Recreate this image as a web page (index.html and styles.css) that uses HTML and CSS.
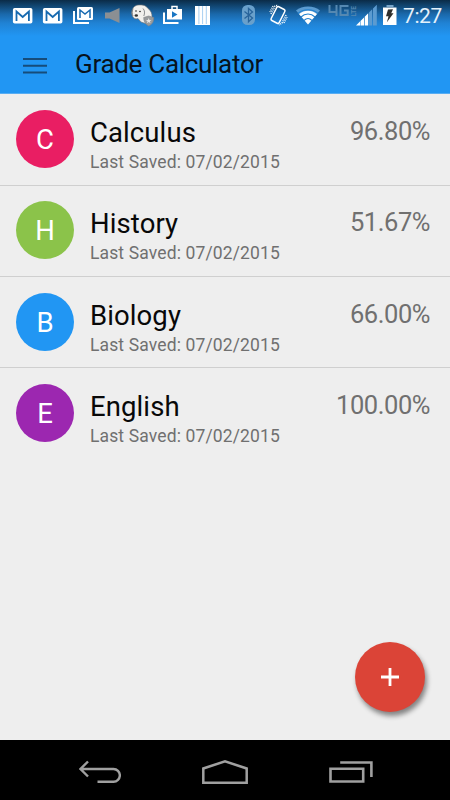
FILE: index.html
```html
<!DOCTYPE html>
<html lang="en">
<head>
<meta charset="utf-8">
<title>Grade Calculator</title>
<link rel="stylesheet" href="styles.css">
</head>
<body>
<div class="screen">
  <header class="top">
    <div class="status">
      <svg class="notifications" width="220" height="32" viewBox="0 0 220 32">
        <defs>
          <g id="mail">
            <rect width="19.5" height="15.5" rx="1.8" fill="#fff"/>
            <path d="M3.6 13V3.6L9.8 9l6.2-5.4V13" fill="none" stroke="#176ab0" stroke-width="1.8"/>
          </g>
        </defs>
        <use href="#mail" x="12.9" y="8"/>
        <use href="#mail" x="42.9" y="8"/>
        <path d="M74 11v12h15" fill="none" stroke="#fff" stroke-width="2"/>
        <rect x="77" y="7" width="16" height="13" rx="1.5" fill="#fff"/>
        <path d="M80 18v-8l5 4 5-4v8" fill="none" stroke="#176ab0" stroke-width="1.5"/>
        <path d="M105 12.5h4.500L119.500 8v15l-10-4.500H105z" fill="#8b8f93"/>
        <path d="M132.500 10c.5-3.500 3.500-5 6.500-5 4-.5 7 .5 9 3.500 3 2 4 5 4 8 0 4-2 7.500-5 7.500l-6-2-3-3.500c-2 .8-4 .3-5-1.500-1.500-2-1.500-5-.5-7z" fill="#f1f0ed" stroke="#6b6f72" stroke-width=".6"/>
        <path d="M143 8.500c2 2 1.800 5 .8 7.500" fill="none" stroke="#8b8e90" stroke-width="1"/>
        <path d="M132.800 9c-1 2-1 5 .2 7" fill="none" stroke="#77797b" stroke-width="1"/>
        <circle cx="136" cy="11" r=".8" fill="#222"/><circle cx="140" cy="11.500" r=".8" fill="#222"/><ellipse cx="136.300" cy="15.500" rx="1.700" ry="1.200" fill="#333"/>
        <path d="m148.700 16 5 1.500c0 4-1 6.500-5 8.500-3.500-2-5-4.500-5-8.500z" fill="#989b9d" stroke="#7d8184" stroke-width=".6"/>
        <path d="m148.700 18 .8 2h2l-1.600 1.300.6 2-1.800-1.200-1.800 1.200.6-2-1.600-1.300h2z" fill="#e5e5e5"/>
        <path d="M164 12.500V23h14.500" fill="none" stroke="#fff" stroke-width="2"/>
        <path d="M167 9h15v10.500h-15z" fill="#fff"/>
        <path d="M172 9V6.500h5V9" fill="none" stroke="#fff" stroke-width="1.500"/>
        <path d="m172 11.300 5.500 3.200-5.500 3.200z" fill="#1976c3"/>
        <path d="M195 6h15v19h-15z" fill="#fff"/>
        <path d="M198.900 6v18M202.600 6v18M206.300 6v18" stroke="#8fc2ec" stroke-width=".8"/>
      </svg>
      <svg class="radios" width="160" height="32" viewBox="240 0 160 32">
        <rect x="242" y="5" width="13" height="20" rx="5.500" fill="#69a0cb"/>
        <path d="m244.500 11.500 8 6.500-4 3.800V8.500l4 3.500-8 6.500" fill="none" stroke="#28649b" stroke-width="1.300"/>
        <rect x="273.500" y="7.300" width="9" height="15.400" rx="1.500" transform="rotate(27 278 15)" fill="none" stroke="#fff" stroke-width="1.500"/>
        <path d="m271 14 4-8 3-1m-5 1-3 6m16 3-4 8-3 2m5-2 3-6" fill="none" stroke="#fff" stroke-width="1.500" stroke-dasharray="1 1"/>
        <path d="M296 10.500c6-5.500 18-5.500 24 0l-12 14z" fill="#5b9bd0"/>
        <path d="M299 14c5-4.500 13-4.500 18 0l-9 10.500z" fill="#fff"/>
        <path d="M298 13.500c5-5 15-5 20 0M301 17c4-4 10-4 14 0M304 20.500c2.500-2.500 5.500-2.500 8 0" fill="none" stroke="#2181cf" stroke-width="1.100"/>
        <path d="M329.500 5v7h7M336.500 5v11M348.500 6h-8v9h7.200v-4.500h-3.700" fill="none" stroke="#5588b1" stroke-width="2"/>
        <text class="lte" transform="translate(355.500 16.500) rotate(-90)">LTE</text>
        <path d="m356 25.500 4-4v4zM360.500 25.500V21l3.500-3.500v8zM364.700 25.500v-8.800l3.500-3.500v12.300z" fill="#fff"/>
        <path d="M369 25.500v-13l3.200-3.200v16.200zM373 25.500V8.500l3.800-3.800v20.800z" fill="#5c9bd0"/>
        <path d="M386.500 5h7v2h-7z" fill="#78a4c8"/>
        <path d="M383 7.500h13.500V25H383z" fill="#fff"/>
        <path d="m388 9.500 5-.3-1.800 4h2.300l-6.600 9 1.600-6H386z" fill="#302f2d"/>
      </svg>
      <span class="clock">7:27</span>
    </div>
    <div class="toolbar">
      <svg class="menu" width="24" height="18" viewBox="0 0 24 18"><path d="M0 2h24M0 8.700h24M0 15.400h24" stroke="#164c7a" stroke-width="2"/></svg>
      <h1 class="title">Grade Calculator</h1>
    </div>
  </header>
  <main class="courses">
    <article class="course">
      <div class="avatar pink">C</div>
      <div class="info"><h2 class="name">Calculus</h2><p class="saved">Last Saved: 07/02/2015</p></div>
      <div class="grade">96.80%</div>
    </article>
    <article class="course">
      <div class="avatar green">H</div>
      <div class="info"><h2 class="name">History</h2><p class="saved">Last Saved: 07/02/2015</p></div>
      <div class="grade">51.67%</div>
    </article>
    <article class="course">
      <div class="avatar blue">B</div>
      <div class="info"><h2 class="name">Biology</h2><p class="saved">Last Saved: 07/02/2015</p></div>
      <div class="grade">66.00%</div>
    </article>
    <article class="course">
      <div class="avatar purple">E</div>
      <div class="info"><h2 class="name">English</h2><p class="saved">Last Saved: 07/02/2015</p></div>
      <div class="grade">100.00%</div>
    </article>
    <button class="add" aria-label="Add course"><svg width="20" height="20" viewBox="0 0 20 20"><path d="M10 1v18M1 10h18" stroke="#fff" stroke-width="2.800"/></svg></button>
  </main>
  <nav class="navbar">
    <svg width="42" height="24" viewBox="0 0 42 24"><path d="M9 1.500 1.500 9 9 16.500M2 9h32.500a6.200 6.200 0 0 1 0 12.700H18.500" fill="none" stroke="#a0a0a0" stroke-width="2.400"/></svg>
    <svg width="46" height="26" viewBox="0 0 46 26"><path d="M1.300 23.700V9.500L23 2.300l21.700 7.200v14.200z" fill="none" stroke="#a0a0a0" stroke-width="2.500"/></svg>
    <svg width="44" height="24" viewBox="0 0 44 24"><path d="M1.500 8.800h32.700v12.700H1.500zM11.200 2.500h31.200v14.500" fill="none" stroke="#a0a0a0" stroke-width="2.600"/></svg>
  </nav>
</div>
</body>
</html>
```
FILE: styles.css
```css
* { box-sizing: border-box; }
body { margin: 0; font-family: Roboto, sans-serif; }
h1, h2, p { margin: 0; font-weight: 400; }
svg { display: block; flex: none; }
.screen { width: 450px; height: 800px; display: flex; flex-direction: column; background: #eee; overflow: hidden; }
.top { height: 94px; flex: none; background: linear-gradient(#0b2b47 0, #114672 6px, #1a68aa 14px, #2082d4 23px, #2196f3 36px); border-bottom: 1px solid #58adf2; }
.status { height: 32px; display: flex; }
.radios { margin-left: 20px; }
.lte { font-size: 6.5px; font-weight: 700; fill: #5588b1; }
.clock { margin-left: 3px; font-size: 21px; line-height: 32px; letter-spacing: -.4px; color: #e4f1fb; white-space: nowrap; }
.toolbar { height: 61px; display: flex; align-items: center; padding-left: 23px; }
.menu { margin-top: 6px; }
.title { margin-left: 28px; padding-top: 2px; font-size: 26px; line-height: 32px; letter-spacing: -.3px; color: #06121c; white-space: nowrap; }
.courses { position: relative; flex: 1; padding-top: .5px; }
.course { height: 91.3px; display: flex; padding: 15.5px 20px 0 16px; border-bottom: 1px solid #cfcfcf; }
.course:last-of-type { border-bottom: 0; }
.avatar { width: 58px; height: 58px; flex: none; border-radius: 50%; color: #fff; font-size: 27.5px; line-height: 60px; text-align: center; }
.pink { background: #e91e63; }
.green { background: #8bc34a; }
.blue { background: #2196f3; }
.purple { background: #9c27b0; }
.info { flex: 1; margin-left: 16px; padding-top: 7px; white-space: nowrap; }
.name { font-size: 27.5px; line-height: 32px; letter-spacing: .1px; color: #080808; }
.saved { margin-top: 3px; font-size: 17.5px; line-height: 20px; letter-spacing: .13px; color: #707070; }
.grade { padding-top: 5px; font-size: 25.5px; line-height: 32px; letter-spacing: -.45px; color: #707070; }
.add { position: absolute; right: 25px; bottom: 28px; width: 70px; height: 70px; display: grid; place-items: center; border: 0; padding: 0; border-radius: 50%; background: #db4437; box-shadow: 2px 4px 5px rgba(0, 0, 0, .45); }
.navbar { height: 60px; flex: none; display: flex; justify-content: space-between; align-items: center; padding: 3px 77px 0 79px; background: #000; }
```
